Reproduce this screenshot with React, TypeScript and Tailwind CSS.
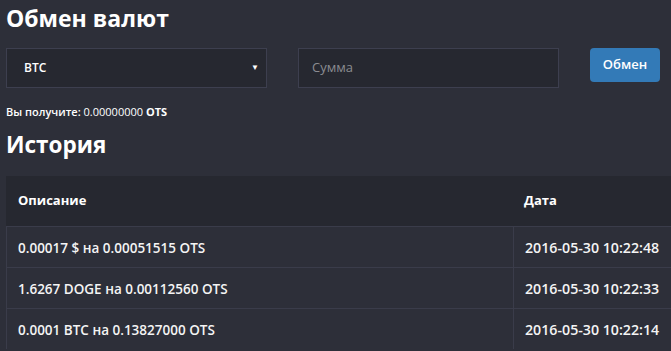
import React from 'react'

const history = [
  { desc: '0.00017 $ на 0.00051515 OTS', date: '2016-05-30 10:22:48' },
  { desc: '1.6267 DOGE на 0.00112560 OTS', date: '2016-05-30 10:22:33' },
  { desc: '0.0001 BTC на 0.13827000 OTS', date: '2016-05-30 10:22:14' },
]

export default function App() {
  return (
    <div
      className="w-[671px] h-[351px] overflow-hidden bg-[#2d2f39] text-white"
      style={{ fontFamily: '"Open Sans", "Noto Sans", sans-serif' }}
    >
      <div className="pl-[6px]">
        <h1 className="pt-[2px] text-[23px] font-bold leading-[32px]">Обмен валют</h1>

        <div className="mt-[14px] flex items-start">
          <div className="relative w-[261px] h-[40px] border border-[#3d3f4f] bg-[#262830] flex items-center pl-[17px]">
            <span className="text-[12px] font-semibold">BTC</span>
            <span className="absolute right-[7px] top-[14px] text-[8px] leading-none">▼</span>
          </div>
          <div className="ml-[31px] w-[261px] h-[40px] border border-[#3d3f4f] bg-[#262830] flex items-center pl-[13px]">
            <span className="text-[13px] text-[#8b8c91]">Сумма</span>
          </div>
          <button className="ml-[31px] w-[70px] h-[34px] rounded-[4px] bg-[#337ab7] text-[13px] font-semibold text-white">
            Обмен
          </button>
        </div>

        <p className="mt-[16px] text-[11px] leading-[16px]">
          <span className="font-semibold">Вы получите:</span> 0.00000000 <span className="font-bold">OTS</span>
        </p>

        <h2 className="mt-[9px] text-[22.5px] font-bold leading-[32px]">История</h2>

        <div className="mt-[15px] w-[680px]">
          <div className="flex h-[50px] bg-[#262830] items-center font-bold text-[13px]">
            <div className="w-[507px] pl-[12px]">Описание</div>
            <div className="pl-[11px]">Дата</div>
          </div>
          {history.map((row) => (
            <div key={row.date} className="flex h-[41px] border-t border-l border-[#3a3c4a] items-center font-semibold text-[#f4f4f4]">
              <div className="w-[507px] h-full flex items-center pl-[11px] pt-[2px] border-r border-[#3a3c4a] text-[13.5px]">{row.desc}</div>
              <div className="pl-[11px] pt-[1px] text-[14.2px]">{row.date}</div>
            </div>
          ))}
        </div>
      </div>
    </div>
  )
}
